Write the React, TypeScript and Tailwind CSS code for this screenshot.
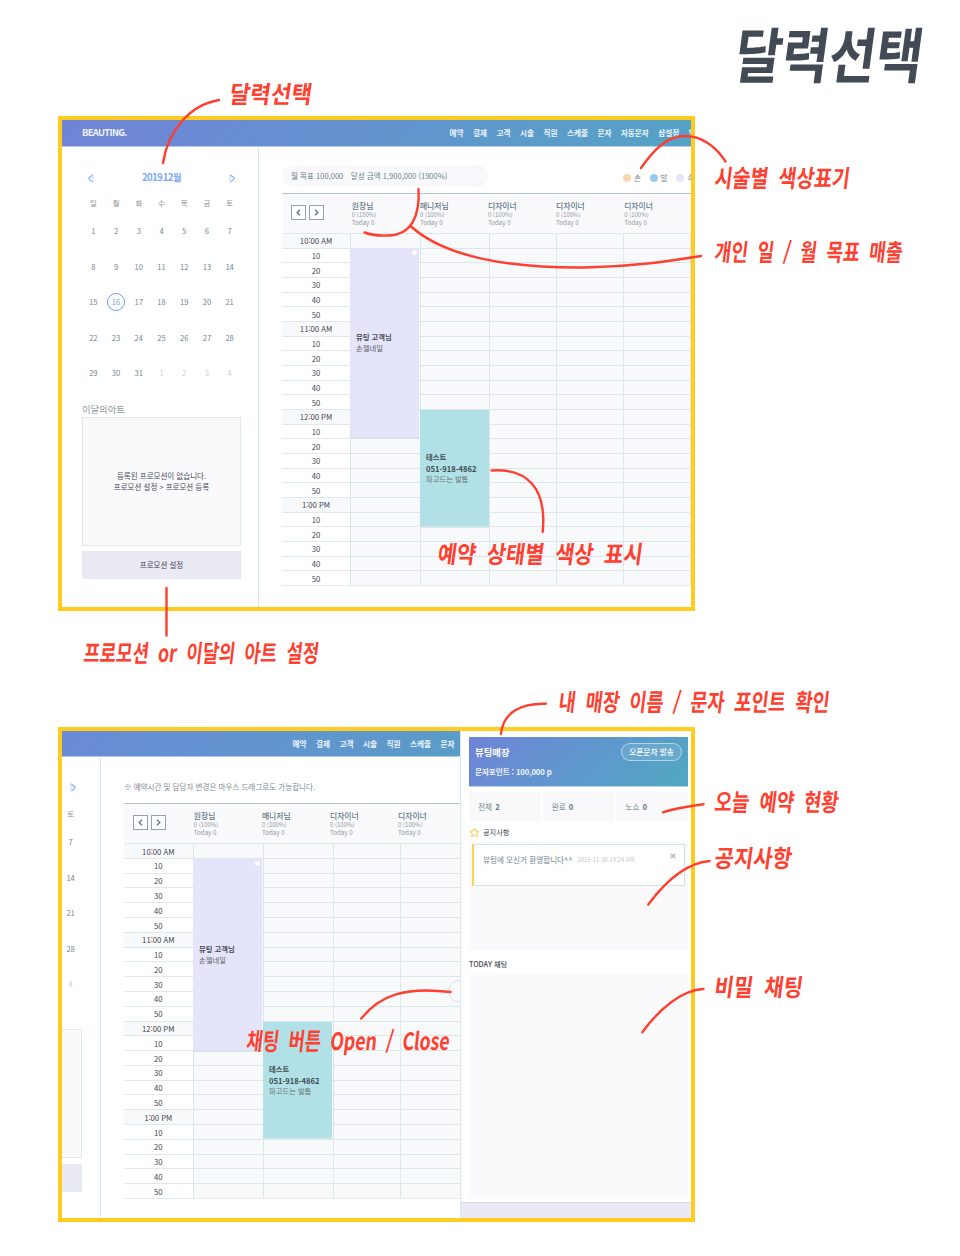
import { useLayoutEffect, useRef, useState } from 'react';
import type { ReactNode } from 'react';
import clsx from 'clsx';

const weekdays = ['일', '월', '화', '수', '목', '금', '토'];
const days = Array.from({ length: 35 }, (_, i) => (i < 31 ? i + 1 : i - 30));
const menu = ['예약', '결제', '고객', '시술', '직원', '스케줄', '문자', '자동문자', '샵설정', '발송'];
const staff = ['원장님', '매니저님', '디자이너', '디자이너', '디자이너'];
const hours = ['10:00 AM', '11:00 AM', '12:00 PM', '1:00 PM'];
const slots = hours.flatMap((h) => [h, '10', '20', '30', '40', '50']);

function Triangle({ flip = false }: { flip?: boolean }) {
  return (
    <svg className={clsx('h-[9px] w-[6px]', flip && '-scale-x-100')} viewBox="0 0 6 9" fill="none">
      <path d="M5 .8 L1.2 3.6 Q.5 4.5 1.2 5.4 L4.6 8.2" stroke="#74abfa" strokeWidth="1.1" />
      <path d="M5 1 V8" stroke="#b9d4fc" strokeWidth=".9" />
    </svg>
  );
}

function Chevron({ flip = false }: { flip?: boolean }) {
  return (
    <span className="flex h-[15px] w-[15px] items-center justify-center border border-[#8fa5ad] bg-white">
      <svg className={clsx('h-[7px] w-[5px]', flip && '-scale-x-100')} viewBox="0 0 5 7" fill="none">
        <path d="M4 .7 L1.1 3.5 L4 6.3" stroke="#5f7883" strokeWidth="1.3" />
      </svg>
    </span>
  );
}

/** Left column. `folded` leaves only the Saturday strip in view. */
function Sidebar({ folded = false }: { folded?: boolean }) {
  const shown = (i: number) => !folded || i % 7 === 6;
  return (
    <aside
      className={clsx(
        'flex h-full w-[197px] shrink-0 flex-col border-r border-[#d9e6e8]',
        folded ? 'pt-[20px] pr-[18px] pl-[19px]' : 'pt-[21px] pr-[17px] pl-[20px]',
      )}
    >
      <div className="flex h-[20px] items-center justify-between px-[6px]">
        <Triangle />
        {!folded && (
          <span className="text-[9.6px] font-bold tracking-[-0.6px] text-[#7ba7f5] [word-spacing:-1.5px]">
            2019 12월
          </span>
        )}
        <Triangle flip />
      </div>
      <div
        className={clsx(
          'grid h-[16px] grid-cols-7 items-center text-center text-[7.4px] text-[#8b9196]',
          folded ? 'mt-[9px]' : 'mt-[7px]',
        )}
      >
        {weekdays.map((d, i) => (
          <span key={d}>{shown(i) && d}</span>
        ))}
      </div>
      <div className="mt-[2px] grid h-[178px] grid-cols-7 grid-rows-5 text-center text-[7.6px] text-[#72858f]">
        {days.map((d, i) => (
          <span
            key={i}
            className={clsx('flex items-center justify-center', i >= 31 && 'text-[#c9d0d4]')}
          >
            {i === 15 && !folded ? (
              <span className="-mx-1 flex h-[18px] w-[18px] shrink-0 items-center justify-center rounded-full border border-[#6d9ff2] text-[#6f9fc4]">
                {d}
              </span>
            ) : (
              shown(i) && d
            )}
          </span>
        ))}
      </div>
      <div
        className={clsx(
          'flex items-center text-[9.3px] whitespace-nowrap text-[#8a949c]',
          folded ? 'h-[27px]' : 'mt-[11px] h-[15px]',
        )}
      >
        {!folded && '이달의아트'}
      </div>
      <div className="flex h-[129px] flex-col items-center justify-center border border-[#dfe9ea] bg-[#fafafc] text-center text-[7.5px] leading-[10.6px] text-[#4d4c60]">
        {!folded && (
          <>
            <p className="whitespace-nowrap">등록된 프로모션이 없습니다.</p>
            <p className="whitespace-nowrap">프로모션 설정 &gt; 프로모션 등록</p>
          </>
        )}
      </div>
      <div
        className={clsx(
          'flex h-[28px] items-center justify-center border border-[#e3ebee] bg-[#eaeaf4] text-[7.5px] text-[#454458]',
          folded ? 'mt-[6px]' : 'mt-[5px]',
        )}
      >
        {!folded && '프로모션 설정'}
      </div>
    </aside>
  );
}

function StaffHeader({ count }: { count: number }) {
  return (
    <div className="flex h-[40px] border-t border-[#b3c4c9] bg-[#fafafc]">
      <div className="flex w-[69.8px] shrink-0 gap-[3px] pt-[11px] pl-[9px]">
        <Chevron />
        <Chevron flip />
      </div>
      {staff.slice(0, count).map((name, i) => (
        <div key={i} className="w-[68.1px] shrink-0 pt-[6px] whitespace-nowrap">
          <p className="text-[7.8px] leading-[11px] font-medium text-[#5f7986]">{name}</p>
          <p className="text-[6px] leading-[8px] text-[#8c979d]">0 (100%)</p>
          <p className="text-[6.2px] leading-[8px] text-[#8c979d]">Today 0</p>
        </div>
      ))}
    </div>
  );
}

function Slots() {
  return (
    <>
      {slots.map((s, i) => (
        <div
          key={i}
          className={clsx(
            'flex items-center justify-center border-t border-[#dde9ea] pt-px text-[7.7px] text-[#44434f]',
            i % 6 === 0 && 'bg-[#f8f9fb]',
          )}
        >
          {s}
        </div>
      ))}
    </>
  );
}

function Cells() {
  return (
    <>
      {slots.map((_, i) => (
        <div key={i} className="border-t border-l border-[#dbe8e9] bg-[#f8f9fb]" />
      ))}
    </>
  );
}

function Booking({ className, children }: { className: string; children: ReactNode }) {
  return (
    <div
      className={clsx(
        'absolute flex flex-col justify-center border-b-2 border-[#d8e5e9] pl-[6px] text-[7.3px] leading-[11px] whitespace-nowrap text-[#5c6068]',
        className,
      )}
    >
      {children}
    </div>
  );
}

function Schedule({ tall = false }: { tall?: boolean }) {
  const rows = 'grid shrink-0 grid-rows-[repeat(24,minmax(0,1fr))]';
  return (
    <div className="w-[410px]">
      <StaffHeader count={tall ? 4 : 5} />
      <div className={clsx('relative flex border-b border-[#e3eced]', tall ? 'h-[356px]' : 'h-[353px]')}>
        <div className={clsx(rows, tall ? 'w-[68.5px]' : 'w-[68px]')}>
          <Slots />
        </div>
        <div className={clsx(rows, tall ? 'w-[70px]' : 'w-[69.5px]')}>
          <Cells />
        </div>
        <div className={clsx(rows, tall ? 'w-[70px]' : 'w-[69px]')}>
          <Cells />
        </div>
        {[0, 1, 2].map((c) => (
          <div key={c} className={clsx(rows, 'w-[67px]')}>
            <Cells />
          </div>
        ))}
        <div className={clsx(rows, 'w-[4px]')}>
          <Cells />
        </div>
        <Booking
          className={clsx(
            'bg-[#e4e5fa]',
            tall ? 'top-[16px] left-[69px] h-[193px] w-[69px]' : 'top-[15px] left-[68px] h-[191px] w-[69px]',
          )}
        >
          <i className="absolute top-[2px] right-[2px] h-[5px] w-[5px] rounded-full bg-white" />
          <b className="text-[#484a55]">뷰팅 고객님</b>
          <span>손젤네일</span>
        </Booking>
        <Booking
          className={clsx(
            'w-[69px] bg-[#b1e0e6]',
            tall ? 'top-[179px] left-[139px] h-[118px]' : 'top-[177px] left-[138px] h-[118px]',
          )}
        >
          <b className="text-[#3f4d52]">테스트</b>
          <b className="text-[7.6px] text-[#3f4d52]">051-918-4862</b>
          <span className="text-[#68777a]">파고드는 발톱</span>
        </Booking>
      </div>
    </div>
  );
}

function Legend({ color, name }: { color: string; name: string }) {
  return (
    <span className="flex shrink-0 items-center gap-[3px]">
      <i className={clsx('h-[8px] w-[8px] rounded-full', color)} />
      {name}
    </span>
  );
}

function Menu({ count }: { count: number }) {
  return (
    <nav className="flex shrink-0 gap-[9.5px] text-[7.6px] font-bold whitespace-nowrap text-white/90">
      {menu.slice(0, count).map((m) => (
        <span key={m}>{m}</span>
      ))}
    </nav>
  );
}

function CalendarScreen() {
  return (
    <section className="flex h-[495px] w-[637px] flex-col overflow-hidden border-4 border-[#ffcb1f]">
      <header className="flex h-[27px] shrink-0 items-center overflow-hidden border-b border-[#b6cbe8] bg-linear-[135deg] from-[#7083d7] to-[#54a3c5] bg-clip-padding pl-[20px]">
        <span className="w-[367.5px] shrink-0 text-[9.4px] font-bold tracking-[-0.68px] text-white/90">BEAUTING.</span>
        <Menu count={10} />
      </header>
      <div className="flex min-h-0 flex-1">
        <Sidebar />
        <main className="min-w-0 flex-1 overflow-hidden pt-[18px] pl-[23px]">
          <div className="flex h-[22px] w-[420px] items-center">
            <div className="flex h-full w-[206px] shrink-0 items-center gap-[7.5px] rounded-full bg-[#f9f9fb] pl-[9px] text-[7.55px] whitespace-nowrap text-[#70818b]">
              <span>월 목표 100,000</span>
              <span>달성 금액 1,900,000 (1900%)</span>
            </div>
            <div className="ml-[135px] flex gap-[8.5px] pt-[3px] text-[7.7px] text-[#7b8790]">
              <Legend color="bg-[#fdd7b3]" name="손" />
              <Legend color="bg-[#94cdec]" name="발" />
              <Legend color="bg-[#e4e5fa]" name="속" />
            </div>
          </div>
          <div className="mt-[6px]">
            <Schedule />
          </div>
        </main>
      </div>
    </section>
  );
}

function Star() {
  return (
    <svg className="h-[11px] w-[11px]" viewBox="0 0 11 11" fill="none">
      <path
        d="M5.5 1 L6.8 4 L10 4.3 L7.6 6.5 L8.4 9.8 L5.5 8.1 L2.6 9.8 L3.4 6.5 L1 4.3 L4.2 4 Z"
        stroke="#fbc74d"
        strokeWidth="1"
        strokeLinejoin="round"
      />
    </svg>
  );
}

function ShopPanel() {
  return (
    <aside className="flex h-full w-[231px] shrink-0 flex-col border-l border-[#dce8e9] bg-white pt-[6px]">
      <div className="ml-[8px] flex w-[219px] flex-col">
        <div className="flex h-[50px] justify-between border-b border-[#b9d3e6] bg-linear-[135deg] from-[#7083d7] via-[#5f97cd] to-[#50a7c2] bg-clip-padding pt-[6px] pr-[6px] pl-[6px] text-white">
          <div className="whitespace-nowrap">
            <p className="text-[9.4px] leading-[18px] font-bold">뷰팅매장</p>
            <p className="text-[7.7px] leading-[22px] font-bold tracking-[-0.15px] text-white/90">문자포인트 : 100,000 p</p>
          </div>
          <span className="flex h-[18px] w-[61px] items-center justify-center rounded-full border border-white/50 bg-white/10 text-[7.7px] font-medium whitespace-nowrap">
            오픈문자 발송
          </span>
        </div>
        <div className="mt-[5px] grid h-[29px] grid-cols-3 gap-[2px] text-[7.7px] text-[#71868f]">
          {[['전체', '2'], ['완료', '0'], ['노쇼', '0']].map(([k, v]) => (
            <div key={k} className="flex items-center gap-[3px] bg-[#f9f9fb] pl-[9px]">
              {k} <b className="text-[#607883]">{v}</b>
            </div>
          ))}
        </div>
        <div className="flex h-[21px] items-center gap-[3px] pt-[2px] text-[7.2px] text-[#44434f]">
          <Star />
          공지사항
        </div>
        <div className="h-[108px] bg-[#fafafc] px-[3px] pt-[2px]">
          <div className="flex h-[42px] justify-between border border-l-2 border-[#d5e3e4] border-l-[#ffd34d] bg-white pt-[9px] pr-[8px] pl-[9px]">
            <div className="flex h-[12px] items-center gap-[5px] whitespace-nowrap">
              <span className="text-[7.6px] text-[#6f858e]">뷰팅에 오신거 환영합니다^^</span>
              <span className="text-[5.9px] text-[#c3c8cb]">2019-11-30 19:24 AM</span>
            </div>
            <svg className="-mt-px h-[6px] w-[6px]" viewBox="0 0 6 6">
              <path d="M.8 .8 L5.2 5.2 M5.2 .8 L.8 5.2" stroke="#bfc3c6" strokeWidth="1.8" />
            </svg>
          </div>
        </div>
        <div className="flex h-[24px] items-end pb-[6px] text-[7.2px] font-medium text-[#44434f]">TODAY 채팅</div>
        <div className="h-[225px] bg-[#fafafc]" />
      </div>
      <div className="mt-auto h-[16px] border-t border-[#cfdfe1] bg-[#eaeaf4]" />
    </aside>
  );
}

function ChatScreen() {
  return (
    <section className="flex h-[495px] w-[637px] overflow-hidden border-4 border-[#ffcb1f]">
      <div className="relative flex w-[398px] shrink-0 flex-col overflow-hidden">
        <header className="flex h-[26px] w-[560px] shrink-0 items-center border-b border-[#b6cbe8] bg-linear-[135deg] from-[#6a8ad5] to-[#52a4c4] bg-clip-padding pl-[230.5px]">
          <Menu count={7} />
        </header>
        <div className="flex min-h-0 flex-1">
          <div className="flex w-[39px] shrink-0 justify-end overflow-hidden">
            <Sidebar folded />
          </div>
          <main className="min-w-0 flex-1 overflow-hidden pl-[23px]">
            <p className="flex h-[46px] items-end pb-[12px] text-[7.56px] whitespace-nowrap text-[#7d8a92]">
              ※ 예약시간 및 담당자 변경은 마우스 드래그로도 가능합니다.
            </p>
            <Schedule tall />
          </main>
        </div>
        <i className="absolute top-[249px] left-[386px] h-[22px] w-[22px] rounded-full border border-[#dbe5e8] bg-[#fafafc]" />
      </div>
      <ShopPanel />
    </section>
  );
}

/** Brush-like caption, condensed so that it fills the width of its box. */
function Note({ className, children }: { className: string; children: string }) {
  const box = useRef<HTMLDivElement>(null);
  const text = useRef<HTMLSpanElement>(null);
  const [ratio, setRatio] = useState(1);
  useLayoutEffect(() => {
    if (box.current && text.current) setRatio(box.current.offsetWidth / text.current.offsetWidth);
  }, []);
  return (
    <div ref={box} className={clsx('absolute font-bold whitespace-nowrap', className)}>
      <span
        ref={text}
        className="inline-block origin-left"
        style={{ transform: `scaleX(${ratio}) skewX(-9deg)` }}
      >
        {children}
      </span>
    </div>
  );
}

const strokes = [
  'M219 100 C190 105 168 130 163 163',
  'M641 168 C655 148 668 136 685 136 C703 136 717 148 725.500 161.500',
  'M418.500 189 C420 215 412 235 388 235.500 C378 236 370 234.500 364.500 232.500',
  'M410.500 226 C450 262 525 268 585 267.500 C635 266.500 670 261 701 256',
  'M491.500 470.500 C527 468 547 488 542.700 532',
  'M166.500 588 V635.500',
  'M546 703.800 C522 703 503 712 501 734',
  'M663 812.300 C675 808 690 806 703.500 804.200',
  'M648.300 904.500 C665 882 685 863 709.500 861',
  'M642.300 1032.300 C660 1008 682 990 703.500 989',
  'M361.300 1018.500 C380 995 405 986.500 450.500 992',
];

const red = 'text-[24px] leading-[30px] text-[#ff3f30] [word-spacing:6px]';

export default function App() {
  return (
    <div
      lang="ko"
      className="relative flex h-[1256px] w-[960px] flex-col gap-[116px] overflow-hidden bg-white pt-[116px] pl-[58px] font-['Noto_Sans_CJK_KR','Noto_Sans',sans-serif] leading-none"
    >
      <CalendarScreen />
      <ChatScreen />

      <svg
        className="pointer-events-none absolute inset-0 h-[1256px] w-[960px]"
        viewBox="0 0 960 1256"
        fill="none"
        stroke="#ff3f30"
        strokeWidth="2.400"
        strokeLinecap="round"
      >
        {strokes.map((d) => (
          <path key={d} d={d} />
        ))}
      </svg>

      <Note className="top-[21px] left-[736px] w-[188px] text-[60px] leading-[62px] text-[#414a55]">달력선택</Note>
      <Note className={clsx(red, 'top-[78px] left-[230px] w-[82px]')}>달력선택</Note>
      <Note className={clsx(red, 'top-[162px] left-[715px] w-[135px]')}>시술별 색상표기</Note>
      <Note className={clsx(red, 'top-[236px] left-[715px] w-[188px]')}>개인 일 / 월 목표 매출</Note>
      <Note className={clsx(red, 'top-[538px] left-[438px] w-[205px]')}>예약 상태별 색상 표시</Note>
      <Note className={clsx(red, 'top-[637px] left-[84px] w-[235px]')}>프로모션 or 이달의 아트 설정</Note>
      <Note className={clsx(red, 'top-[686px] left-[559px] w-[271px]')}>내 매장 이름 / 문자 포인트 확인</Note>
      <Note className={clsx(red, 'top-[786px] left-[715px] w-[124px]')}>오늘 예약 현황</Note>
      <Note className={clsx(red, 'top-[842px] left-[715px] w-[77px]')}>공지사항</Note>
      <Note className={clsx(red, 'top-[971px] left-[715px] w-[88px]')}>비밀 채팅</Note>
      <Note className={clsx(red, 'top-[1025px] left-[247px] w-[203px]')}>채팅 버튼 Open / Close</Note>
    </div>
  );
}
